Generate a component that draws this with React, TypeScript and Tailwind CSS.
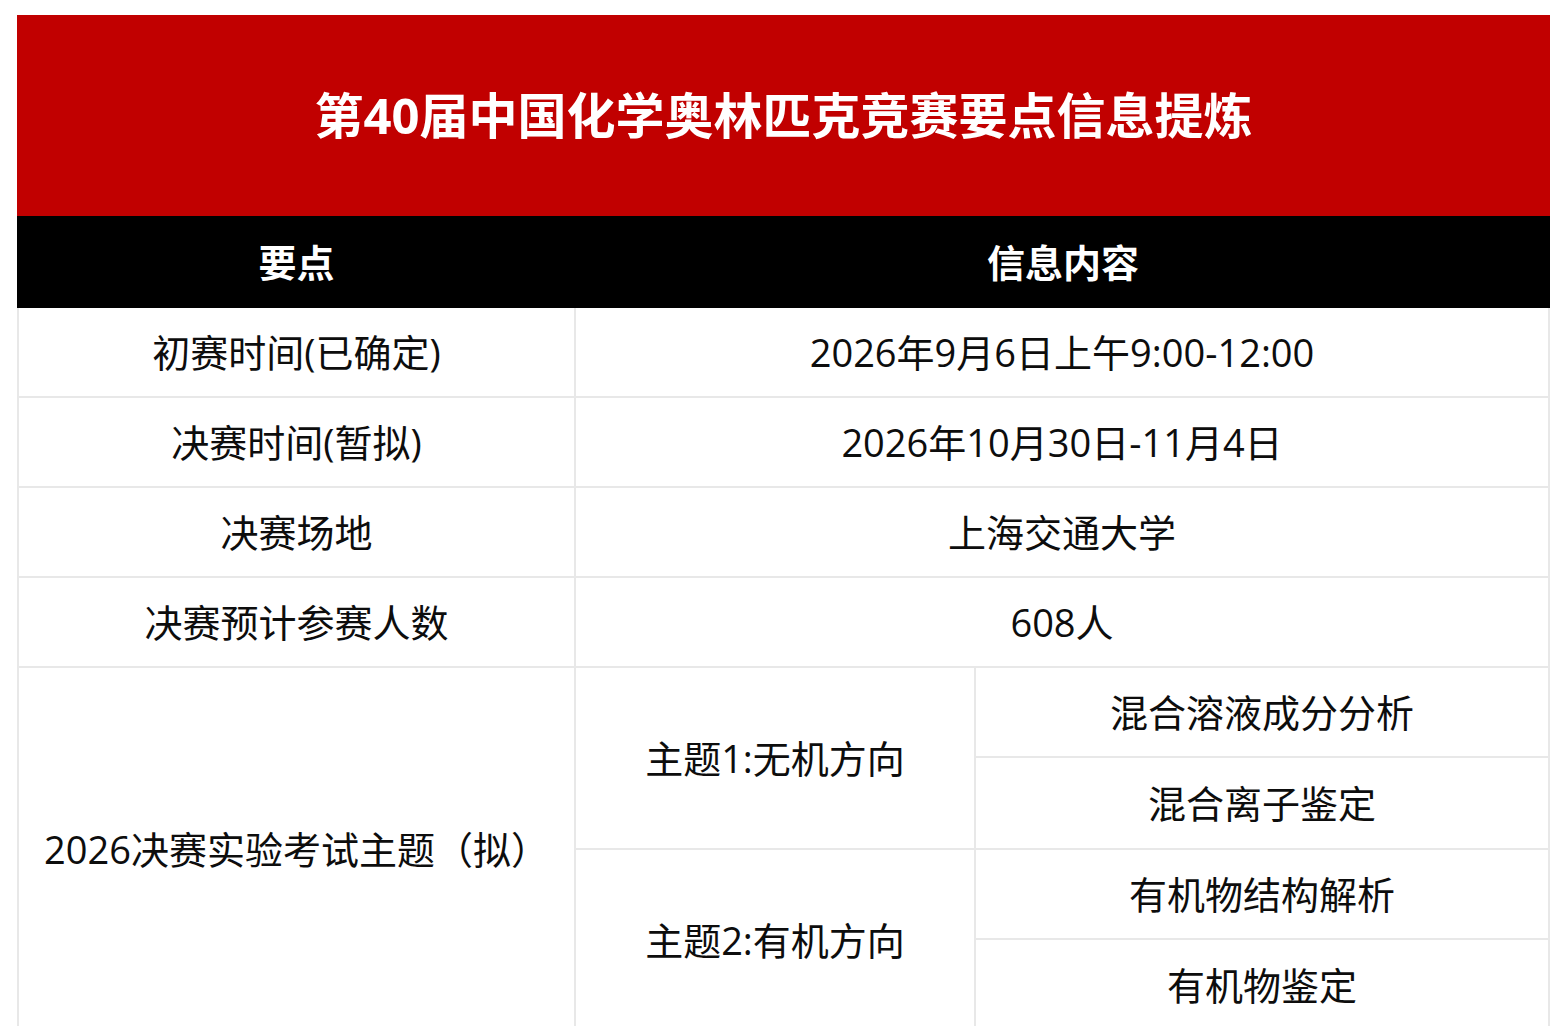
const font = "font-['Open_Sans','Noto_Sans_CJK_SC',sans-serif]";

const rows = [
  { label: "初赛时间(已确定)", value: "2026年9月6日上午9:00-12:00" },
  { label: "决赛时间(暂拟)", value: "2026年10月30日-11月4日" },
  { label: "决赛场地", value: "上海交通大学" },
  { label: "决赛预计参赛人数", value: "608人" },
];

const themes = [
  { title: "主题1:无机方向", items: ["混合溶液成分分析", "混合离子鉴定"] },
  { title: "主题2:有机方向", items: ["有机物结构解析", "有机物鉴定"] },
];

function Cell({ children, className = "" }: { children: React.ReactNode; className?: string }) {
  return (
    <div className={`flex items-center justify-center text-[38px] leading-none text-[#0d0d0d] ${className}`}>
      {children}
    </div>
  );
}

export default function App() {
  return (
    <div className={`min-h-screen bg-white pt-[15px] pl-[17px] pr-[16px] ${font}`}>
      <div className="w-[1533px]">
        {/* Title */}
        <div className="flex h-[201px] items-center justify-center bg-[#c10000]">
          <h1 className="text-[49px] font-bold leading-none text-white">
            第40届中国化学奥林匹克竞赛要点信息提炼
          </h1>
        </div>

        {/* Header */}
        <div className="flex h-[92px] bg-black text-white">
          <div className="flex w-[559px] items-center justify-center text-[38px] font-bold">要点</div>
          <div className="flex flex-1 items-center justify-center text-[38px] font-bold">信息内容</div>
        </div>

        {/* Body */}
        <div className="border-l-2 border-r-2 border-[#e8e8e8]">
          {rows.map((r) => (
            <div key={r.label} className="flex h-[90px] border-b-2 border-[#e8e8e8]">
              <Cell className="w-[557px] border-r-2 border-[#e8e8e8]">{r.label}</Cell>
              <Cell className="flex-1">{r.value}</Cell>
            </div>
          ))}

          <div className="flex">
            <Cell className="w-[557px] border-r-2 border-[#e8e8e8]">2026决赛实验考试主题（拟）</Cell>
            <div className="flex flex-1 flex-col">
              {themes.map((t, i) => (
                <div key={t.title} className={`flex ${i === 0 ? "border-b-2 border-[#e8e8e8]" : ""}`}>
                  <Cell className="w-[400px] border-r-2 border-[#e8e8e8]">{t.title}</Cell>
                  <div className="flex flex-1 flex-col">
                    {t.items.map((it, j) => (
                      <Cell
                        key={it}
                        className={`h-[90px] ${j === 0 ? "border-b-2 border-[#e8e8e8]" : ""}`}
                      >
                        {it}
                      </Cell>
                    ))}
                  </div>
                </div>
              ))}
            </div>
          </div>
        </div>
      </div>
    </div>
  );
}
